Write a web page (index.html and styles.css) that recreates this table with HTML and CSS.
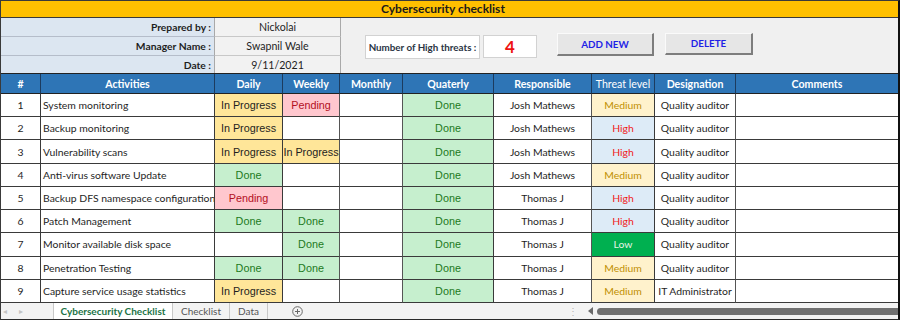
FILE: index.html
```html
<!DOCTYPE html>
<html>
<head>
<meta charset="utf-8">
<title>Cybersecurity checklist</title>
<link rel="stylesheet" href="styles.css">
</head>
<body>
<div class="sheet">
  <div class="title">Cybersecurity checklist</div>
  <div class="info">
    <div class="meta">
      <div class="lbl">Prepared by :</div><div class="val">Nickolai</div>
      <div class="lbl">Manager Name :</div><div class="val">Swapnil Wale</div>
      <div class="lbl last">Date :</div><div class="val last">9/11/2021</div>
    </div>
    <div class="panel">
      <div class="count-label">Number of High threats :</div>
      <div class="count">4</div>
      <div class="btn add">ADD NEW</div>
      <div class="btn del">DELETE</div>
    </div>
  </div>
  <div class="grid">
    <div class="h">#</div>
    <div class="h">Activities</div>
    <div class="h">Daily</div>
    <div class="h thick">Weekly</div>
    <div class="h thick">Monthly</div>
    <div class="h">Quaterly</div>
    <div class="h thick">Responsible</div>
    <div class="h light">Threat level</div>
    <div class="h thick">Designation</div>
    <div class="h end">Comments</div>

    <div class="c">1</div><div class="c act">System monitoring</div><div class="c st prog">In Progress</div><div class="c st pend thick">Pending</div><div class="c thick"></div><div class="c st done">Done</div><div class="c thick">Josh Mathews</div><div class="c med">Medium</div><div class="c thick">Quality auditor</div><div class="c end"></div>

    <div class="c">2</div><div class="c act">Backup monitoring</div><div class="c st prog">In Progress</div><div class="c thick"></div><div class="c thick"></div><div class="c st done">Done</div><div class="c thick">Josh Mathews</div><div class="c high">High</div><div class="c thick">Quality auditor</div><div class="c end"></div>

    <div class="c">3</div><div class="c act">Vulnerability scans</div><div class="c st prog">In Progress</div><div class="c st prog thick">In Progress</div><div class="c thick"></div><div class="c st done">Done</div><div class="c thick">Josh Mathews</div><div class="c high">High</div><div class="c thick">Quality auditor</div><div class="c end"></div>

    <div class="c">4</div><div class="c act">Anti-virus software Update</div><div class="c st done">Done</div><div class="c thick"></div><div class="c thick"></div><div class="c st done">Done</div><div class="c thick">Josh Mathews</div><div class="c med">Medium</div><div class="c thick">Quality auditor</div><div class="c end"></div>

    <div class="c">5</div><div class="c act">Backup DFS namespace configuration</div><div class="c st pend">Pending</div><div class="c thick"></div><div class="c thick"></div><div class="c st done">Done</div><div class="c thick">Thomas J</div><div class="c high">High</div><div class="c thick">Quality auditor</div><div class="c end"></div>

    <div class="c">6</div><div class="c act">Patch Management</div><div class="c st done">Done</div><div class="c st done thick">Done</div><div class="c thick"></div><div class="c st done">Done</div><div class="c thick">Thomas J</div><div class="c high">High</div><div class="c thick">Quality auditor</div><div class="c end"></div>

    <div class="c">7</div><div class="c act">Monitor available disk space</div><div class="c"></div><div class="c st done thick">Done</div><div class="c thick"></div><div class="c st done">Done</div><div class="c thick">Thomas J</div><div class="c low">Low</div><div class="c thick">Quality auditor</div><div class="c end"></div>

    <div class="c">8</div><div class="c act">Penetration Testing</div><div class="c st done">Done</div><div class="c st done thick">Done</div><div class="c thick"></div><div class="c st done">Done</div><div class="c thick">Thomas J</div><div class="c med">Medium</div><div class="c thick">Quality auditor</div><div class="c end"></div>

    <div class="c">9</div><div class="c act">Capture service usage statistics</div><div class="c st prog">In Progress</div><div class="c thick"></div><div class="c thick"></div><div class="c st done">Done</div><div class="c thick">Thomas J</div><div class="c med">Medium</div><div class="c thick">IT Administrator</div><div class="c end"></div>
  </div>
  <div class="tabs">
    <div class="nav"><span class="arr">&#9666;</span><span class="arr">&#9656;</span></div>
    <div class="tab active">Cybersecurity Checklist</div>
    <div class="tab">Checklist</div>
    <div class="tab">Data</div>
    <svg class="plus" width="11" height="11" viewBox="0 0 11 11"><circle cx="5.5" cy="5.5" r="4.8" fill="none" stroke="#6a6a6a" stroke-width="1"/><path d="M5.5 3v5M3 5.5h5" stroke="#6a6a6a" stroke-width="1"/></svg>
    <div class="spacer"></div>
    <div class="dots">&#8942;</div>
    <div class="tri"></div>
    <div class="thumb"></div>
  </div>
</div>
</body>
</html>
```

FILE: styles.css
```css
* { box-sizing: border-box; margin: 0; padding: 0; }
body { margin: 0; background: #fff; font-family: Lato, "Noto Sans", sans-serif; color: #1b1b1b; }

.sheet {
  width: 900px; height: 320px;
  border-top: 1px solid #3a3a3a; border-left: 1px solid #3a3a3a;
  border-bottom: 1px solid #2a2a2a; border-right: 2px solid #111;
  display: flex; flex-direction: column; overflow: hidden;
}

.title {
  height: 17px; flex: none;
  background: #FFC000; border-bottom: 1px solid #3a3a3a;
  font-weight: bold; font-size: 12px; line-height: 15px;
  padding-left: 380px; color: #1a1a1a;
}

.info { display: flex; height: 55px; flex: none; }
.meta { display: grid; grid-template-columns: 214px 126px; grid-template-rows: 19px 19px 17px; }
.lbl {
  background: #DCE6F1; border-right: 1px solid #a9a9a9; border-bottom: 1px solid #b5bdca;
  text-align: right; font-weight: bold; font-size: 10.3px; line-height: 18px; padding-right: 3px; color: #1e1e1e;
}
.val {
  background: #F2F2F2; border-right: 1px solid #a9a9a9; border-bottom: 1px solid #c8c8c8;
  text-align: center; font-size: 10.6px; line-height: 19px; color: #1e1e1e;
}
.meta .last { border-bottom: none; }

.panel { flex: 1; background: #F0F0F0; display: flex; align-items: flex-start; }
.count-label {
  margin: 17px 0 0 24px; width: 115px; height: 24px;
  background: #fff; border: 1px solid #d2d2d2;
  font-weight: bold; font-size: 9.8px; line-height: 22px; text-align: center; color: #2b3544;
  white-space: nowrap;
}
.count {
  margin: 17px 0 0 3px; width: 54px; height: 23px;
  background: #fff; border: 1px solid #d2d2d2;
  font-weight: bold; font-size: 17px; line-height: 21px; text-align: center; color: #ee1111;
}
.btn {
  margin-top: 15px; height: 23px;
  background: #E6E6E6;
  border-top: 1px solid #fafafa; border-left: 1px solid #fafafa;
  border-right: 2px solid #7d7d7d; border-bottom: 2px solid #7d7d7d;
  font-weight: bold; font-size: 9.8px; line-height: 20px; text-align: center; color: #1f1fe6;
}
.add { margin-left: 20px; width: 97px; }
.del { margin-left: 11px; width: 88px; height: 22px; line-height: 19px; }

.grid {
  display: grid; flex: none;
  grid-template-columns: 40px 174px 68px 57px 63px 91px 98px 63px 81px 162px;
  grid-template-rows: 20px repeat(9, 23.22px);
  border-top: 1px solid #222;
}
.h {
  background: #2E75B6; color: #fff; font-weight: bold; font-size: 10.6px;
  display: flex; align-items: center; justify-content: center;
  border-right: 1px solid #1c3b5e; border-bottom: 1px solid #222;
}
.h.light { font-weight: normal; }
.c {
  border-right: 1px solid #3a3a3a; border-bottom: 1px solid #3a3a3a;
  display: flex; align-items: center; justify-content: center;
  font-size: 10.4px; white-space: nowrap; overflow: hidden; color: #1e1e1e;
}
.c.thick { border-right: 1px solid #555; }
.c.end, .h.end { border-right: none; }
.c.act { justify-content: flex-start; padding-left: 2px; }

.st { font-family: "Liberation Sans", Arial, sans-serif; font-size: 10.8px; }
.prog { background: #FFE699; color: #1e1e1e; }
.pend { background: #FFC7CE; color: #b3101e; }
.done { background: #C6EFCE; color: #1c7a1c; }
.med { background: #FFF2CC; color: #BF8F00; }
.high { background: #DDEBF7; color: #f01a1a; }
.low { background: #00B050; color: #e4f3e4; }

.tabs { height: 16px; flex: none; background: #F3F3F3; display: flex; align-items: stretch; }
.nav { width: 52px; display: flex; align-items: center; gap: 12px; padding-left: 2px; }
.arr { color: #c4c4c4; font-size: 8px; line-height: 1; }
.tab {
  font-size: 10px; line-height: 16px; color: #555; text-align: center;
  border-right: 1px solid #c8c8c8;
}
.tab.active {
  width: 120px; background: #fff; color: #217346; font-weight: bold;
  border-left: 1px solid #c8c8c8;
}
.tab:nth-child(3) { width: 57px; }
.tab:nth-child(4) { width: 38px; }
.plus { margin: 3px 0 0 24px; }
.spacer { flex: 1; }
.dots { color: #b5b5b5; font-size: 10px; line-height: 16px; margin-right: 10px; }
.tri {
  width: 0; height: 0; margin-top: 4px;
  border-top: 4px solid transparent; border-bottom: 4px solid transparent;
  border-right: 5px solid #6a6a6a;
}
.thumb {
  width: 301px; height: 7px; margin: 5px 0 0 4px;
  background: #707070; border-radius: 4px 0 0 4px;
}
```
